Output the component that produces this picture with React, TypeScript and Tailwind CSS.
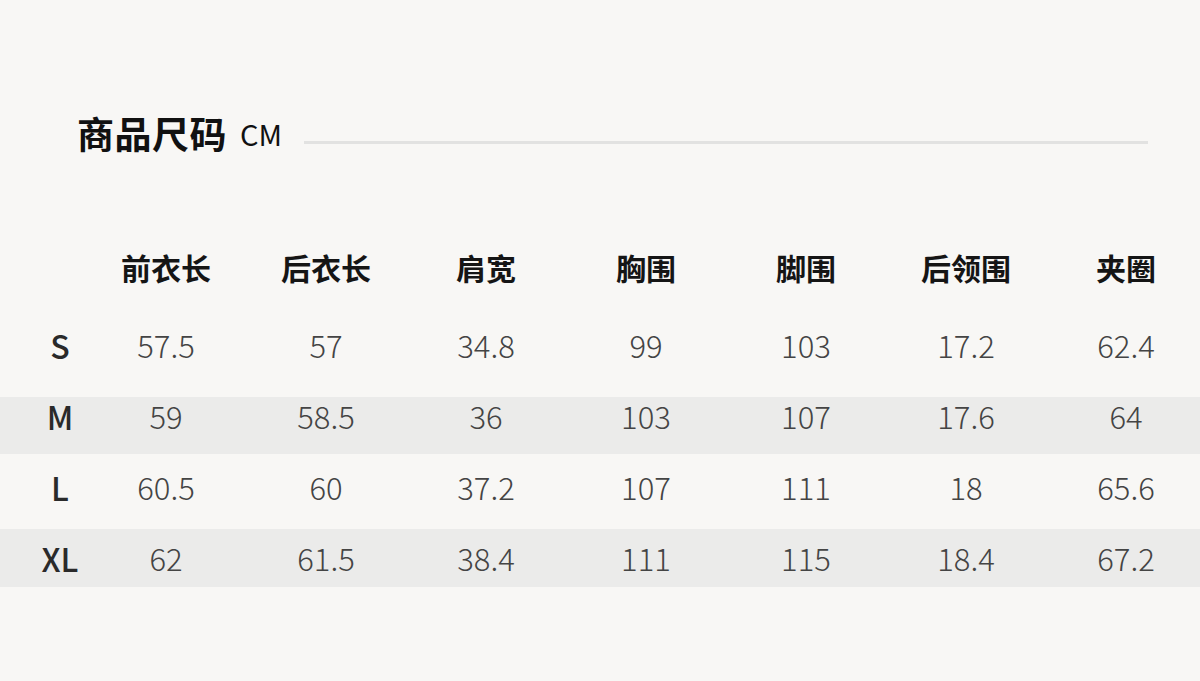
const cjk = { fontFamily: '"Noto Sans CJK SC", "Noto Sans", sans-serif' }

const columns = ['前衣长', '后衣长', '肩宽', '胸围', '脚围', '后领围', '夹圈']

const rows = [
  { size: 'S', values: ['57.5', '57', '34.8', '99', '103', '17.2', '62.4'], striped: false, h: 'h-[105px]', pad: 'pt-[0px]' },
  { size: 'M', values: ['59', '58.5', '36', '103', '107', '17.6', '64'], striped: true, h: 'h-[57px]', pad: 'pb-[20px]' },
  { size: 'L', values: ['60.5', '60', '37.2', '107', '111', '18', '65.6'], striped: false, h: 'h-[75px]', pad: 'pb-[10px]' },
  { size: 'XL', values: ['62', '61.5', '38.4', '111', '115', '18.4', '67.2'], striped: true, h: 'h-[58px]', pad: 'pb-[0px]' },
]

export default function App() {
  return (
    <div className="w-[1200px] h-[681px] bg-[#f8f7f5] overflow-hidden" style={cjk}>
      <div className="flex items-center pt-[110px] pl-[77px] pr-[52px]">
        <span className="text-[37px] leading-[46px] font-semibold text-[#111] tracking-[0.5px]">商品尺码</span>
        <span className="ml-[13px] text-[29px] leading-[46px] text-[#111]">CM</span>
        <div className="flex-1 ml-[22px] mt-[18px] h-[3px] bg-[#e2e2e1]" />
      </div>

      <div className="flex mt-[86px] h-[50px] items-center">
        <div className="w-[86px] shrink-0" />
        {columns.map((c) => (
          <div key={c} className="w-[160px] shrink-0 text-center text-[30px] leading-[40px] font-semibold text-[#151515]">
            {c}
          </div>
        ))}
      </div>

      <div>
        {rows.map((r) => (
          <div key={r.size} className={`flex items-center ${r.h} ${r.pad} ${r.striped ? 'bg-[#ebebea]' : ''}`}>
            <div className="w-[86px] shrink-0 pl-[34px] text-center text-[32px] leading-[40px] font-medium text-[#2a2a2a]">
              {r.size}
            </div>
            {r.values.map((v, i) => (
              <div key={i} className="w-[160px] shrink-0 text-center text-[31px] leading-[40px] font-light text-[#444]">
                {v}
              </div>
            ))}
          </div>
        ))}
      </div>
    </div>
  )
}
